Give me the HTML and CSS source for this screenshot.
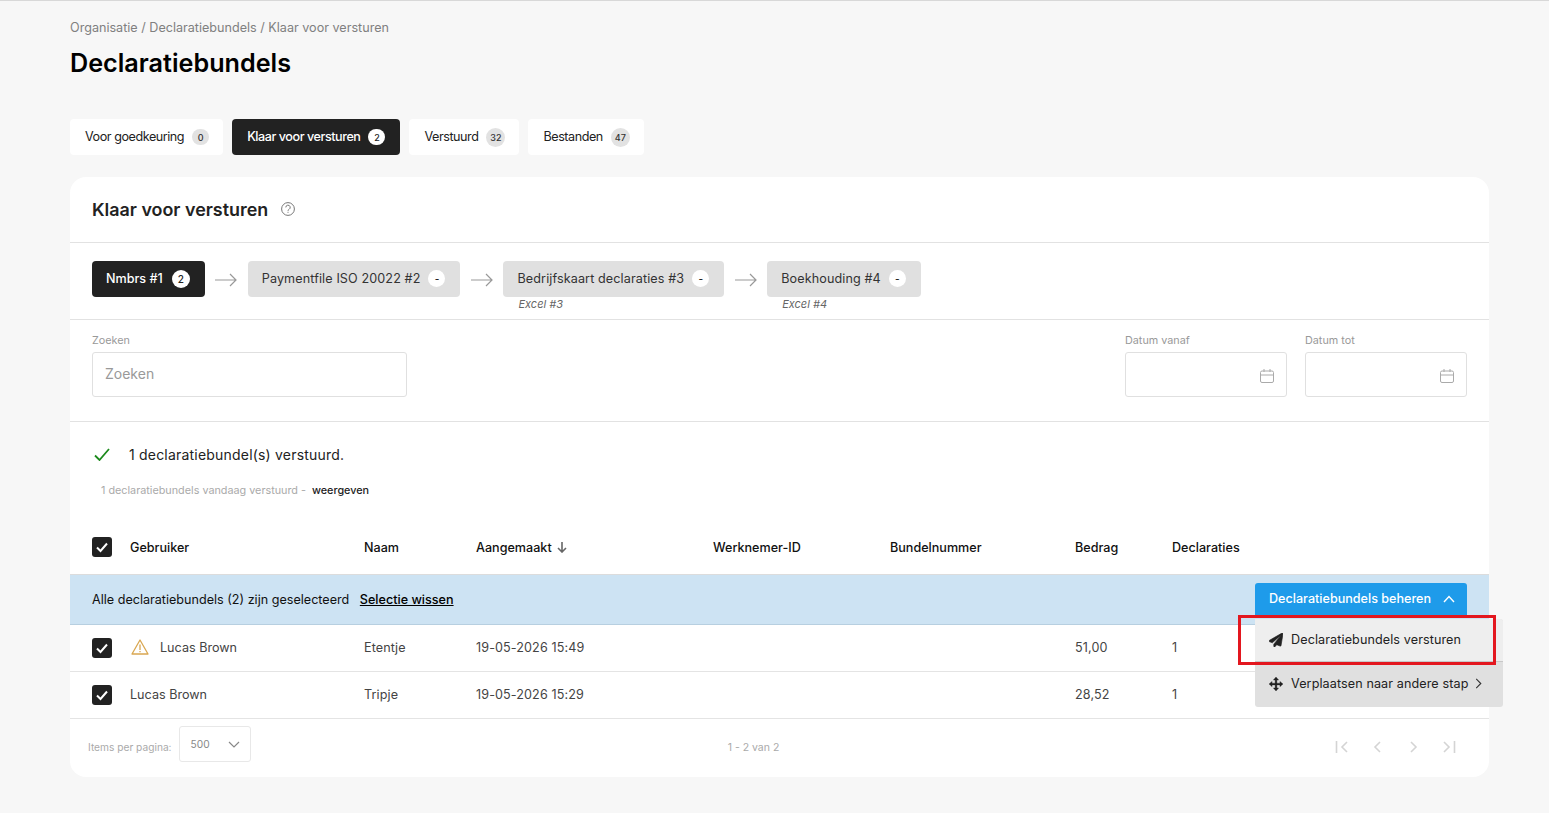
FILE: index.html
```html
<!DOCTYPE html>
<html lang="nl">
<head>
    <meta charset="UTF-8">
    <meta name="viewport" content="width=device-width, initial-scale=1.0">
    <title>Declaratiebundels</title>
    <link rel="stylesheet" href="styles.css">
</head>
<body>
    <div class="breadcrumb">Organisatie / Declaratiebundels / Klaar voor versturen</div>
    <h1>Declaratiebundels</h1>

    <div class="tabs">
        <div class="tab"><span class="tab-label">Voor goedkeuring</span> <span class="count count-small">0</span></div>
        <div class="tab active"><span class="tab-label">Klaar voor versturen</span> <span class="count count-small">2</span></div>
        <div class="tab"><span class="tab-label">Verstuurd</span> <span class="count">32</span></div>
        <div class="tab"><span class="tab-label">Bestanden</span> <span class="count">47</span></div>
    </div>

    <div class="card">
        <div class="card-header">
            <h2>Klaar voor versturen</h2>
            <svg class="help-icon" viewBox="0 0 14 14" fill="none" stroke="#777" stroke-width="1">
                <circle cx="7" cy="7" r="6.4"/>
                <path d="M4.800 5.400a2.200 2.200 0 1 1 3.300 1.900c-.7.4-1.100.8-1.100 1.500"/>
                <path d="M7 9.800v1"/>
            </svg>
        </div>

        <div class="steps">
            <div class="step-wrap">
                <div class="step active"><span class="step-label">Nmbrs #1</span> <span class="step-count">2</span></div>
            </div>
            <svg class="arrow" viewBox="0 0 22 14" fill="none" stroke="#999" stroke-width="1.2"><path d="M0 7h21M15 1l6 6-6 6"/></svg>
            <div class="step-wrap">
                <div class="step"><span class="step-label">Paymentfile ISO 20022 #2</span> <span class="step-count">-</span></div>
            </div>
            <svg class="arrow" viewBox="0 0 22 14" fill="none" stroke="#999" stroke-width="1.2"><path d="M0 7h21M15 1l6 6-6 6"/></svg>
            <div class="step-wrap">
                <div class="step"><span class="step-label">Bedrijfskaart declaraties #3</span> <span class="step-count">-</span></div>
                <div class="step-note">Excel #3</div>
            </div>
            <svg class="arrow" viewBox="0 0 22 14" fill="none" stroke="#999" stroke-width="1.2"><path d="M0 7h21M15 1l6 6-6 6"/></svg>
            <div class="step-wrap">
                <div class="step"><span class="step-label">Boekhouding #4</span> <span class="step-count">-</span></div>
                <div class="step-note">Excel #4</div>
            </div>
        </div>

        <div class="filters">
            <div class="field field-search">
                <label>Zoeken</label>
                <div class="input placeholder">Zoeken</div>
            </div>
            <div class="field field-date">
                <label>Datum vanaf</label>
                <div class="input">
                    <svg class="cal-icon" viewBox="0 0 14 14" fill="none" stroke="#aaa" stroke-width="1"><rect x="0.5" y="2" width="13" height="11.5" rx="1.5"/><path d="M0.5 6h13M4 0v3M10 0v3"/></svg>
                </div>
            </div>
            <div class="field field-date">
                <label>Datum tot</label>
                <div class="input">
                    <svg class="cal-icon" viewBox="0 0 14 14" fill="none" stroke="#aaa" stroke-width="1"><rect x="0.5" y="2" width="13" height="11.5" rx="1.5"/><path d="M0.5 6h13M4 0v3M10 0v3"/></svg>
                </div>
            </div>
        </div>

        <div class="notice">
            <div class="notice-main">
                <svg class="notice-check" viewBox="0 0 16 13" fill="none" stroke="#1c8a1c" stroke-width="1.800"><path d="M1 7.500l4.500 4.500L15 1"/></svg>
                <span>1 declaratiebundel(s) verstuurd.</span>
            </div>
            <div class="notice-sub">1 declaratiebundels vandaag verstuurd - <span class="notice-link">weergeven</span></div>
        </div>

        <div class="row row-head">
            <span class="check"><svg viewBox="0 0 20 20" fill="none" stroke="#fff" stroke-width="2"><path d="M5 10.5l3.5 3.5L15 6.5"/></svg></span>
            <span>Gebruiker</span>
            <span>Naam</span>
            <span class="sort">Aangemaakt
                <svg viewBox="0 0 12 12" fill="none" stroke="#666" stroke-width="1.6"><path d="M6 1v10M2 7l4 4 4-4"/></svg>
            </span>
            <span>Werknemer-ID</span>
            <span>Bundelnummer</span>
            <span>Bedrag</span>
            <span>Declaraties</span>
        </div>

        <div class="bulk-bar">
            <div class="bulk-text">Alle declaratiebundels (2) zijn geselecteerd <a class="bulk-clear">Selectie wissen</a></div>
            <div class="manage">
                <button class="manage-button">Declaratiebundels beheren
                    <svg viewBox="0 0 12 8" fill="none" stroke="#fff" stroke-width="1.4"><path d="M1 7l5-5.5L11 7"/></svg>
                </button>
                <div class="menu">
                    <div class="menu-item menu-item-hover">
                        <svg class="menu-icon" viewBox="0 0 512 512" fill="#222" stroke="#222" stroke-width="24" stroke-linejoin="round"><path d="M476 3.200L12.500 270.600c-18.100 10.400-15.800 35.600 2.200 43.200L121 358.400l287.300-253.200c5.500-4.900 13.300 3 8.600 8.400L176 407v80.500c0 23.600 28.500 32.900 42.500 15.800L282 426l124.600 52.200c14.200 6 30.400-2.900 33-17.400l72-432C514 8.600 491.500-5.800 476 3.200z"/></svg>
                        Declaratiebundels versturen
                    </div>
                    <div class="menu-item">
                        <svg class="menu-icon" viewBox="0 0 16 16" fill="#222" stroke="#222" stroke-width="0.4" stroke-linejoin="round"><path d="M8 0l3 3.500H9V7h3.500V5l3.500 3-3.500 3V9H9v3.500h2L8 16l-3-3.500h2V9H3.500v2L0 8l3.500-3v2H7V3.500H5z"/></svg>
                        Verplaatsen naar andere stap
                        <svg class="menu-chevron" viewBox="0 0 7 12" fill="none" stroke="#333" stroke-width="1.200"><path d="M1 1l5 5-5 5"/></svg>
                    </div>
                </div>
                <div class="highlight"></div>
            </div>
        </div>

        <div class="row row-body">
            <span class="check"><svg viewBox="0 0 20 20" fill="none" stroke="#fff" stroke-width="2"><path d="M5 10.5l3.5 3.5L15 6.5"/></svg></span>
            <span class="user">
                <svg class="warn-icon" viewBox="0 0 18 16" fill="none" stroke="#d9a751" stroke-width="1.300"><path d="M9 1L1 15h16z" stroke-linejoin="round"/><path d="M9 5.500v5.500M9 12v1.200"/></svg>
                Lucas Brown
            </span>
            <span>Etentje</span>
            <span>19-05-2026 15:49</span>
            <span></span>
            <span></span>
            <span>51,00</span>
            <span>1</span>
        </div>
        <div class="row row-body">
            <span class="check"><svg viewBox="0 0 20 20" fill="none" stroke="#fff" stroke-width="2"><path d="M5 10.5l3.5 3.5L15 6.5"/></svg></span>
            <span class="user">Lucas Brown</span>
            <span>Tripje</span>
            <span>19-05-2026 15:29</span>
            <span></span>
            <span></span>
            <span>28,52</span>
            <span>1</span>
        </div>

        <div class="pager">
            <div class="pager-size">
                <span class="pager-label">Items per pagina:</span>
                <div class="pager-select">500
                    <svg viewBox="0 0 12 7" fill="none" stroke="#888" stroke-width="1.200"><path d="M1 1l5 5 5-5"/></svg>
                </div>
            </div>
            <div class="pager-range">1 - 2 van 2</div>
            <div class="pager-nav">
                <svg viewBox="0 0 14 12" fill="none" stroke="#d4d4d4" stroke-width="1.600"><path d="M2.500 0v12M13 1L8 6l5 5"/></svg>
                <svg viewBox="0 0 14 12" fill="none" stroke="#d4d4d4" stroke-width="1.600"><path d="M10 1L5 6l5 5"/></svg>
                <svg viewBox="0 0 14 12" fill="none" stroke="#d4d4d4" stroke-width="1.600"><path d="M5 1l5 5-5 5"/></svg>
                <svg viewBox="0 0 14 12" fill="none" stroke="#d4d4d4" stroke-width="1.600"><path d="M12.500 0v12M2 1l5 5-5 5"/></svg>
            </div>
        </div>
    </div>
</body>
</html>
```

FILE: styles.css
```css
* {
    box-sizing: border-box;
}
body {
    margin: 0;
    height: 813px;
    overflow: hidden;
    padding: 0 60px 0 70px;
    background: #f7f7f7;
    border-top: 1px solid #d8d8d8;
    font-family: Inter, "Liberation Sans", sans-serif;
    font-size: 12.6px;
    color: #333;
}
.breadcrumb {
    padding-top: 18px;
    line-height: 17px;
    color: #808080;
}
h1 {
    margin: 9px 0 0;
    font-size: 25.2px;
    line-height: 36px;
    font-weight: 600;
    color: #000;
}
.tabs {
    display: flex;
    gap: 9px;
    margin-top: 38px;
}
.tab {
    display: flex;
    align-items: center;
    gap: 8px;
    height: 36px;
    padding: 0 14px 0 15px;
    background: #fff;
    border-radius: 4px;
    color: #222;
}
.tab-label {
    padding-bottom: 2px;
    letter-spacing: -0.45px;
}
.tab.active {
    background: #222;
    color: #fff;
    font-weight: 500;
    padding: 0 15px;
}
.count {
    display: flex;
    align-items: center;
    justify-content: center;
    width: 19px;
    height: 19px;
    border-radius: 50%;
    background: #e2e2e2;
    font-size: 9px;
    font-weight: 500;
    color: #333;
}
.count-small {
    width: 17px;
    height: 16px;
    border-radius: 8px;
}
.tab.active .count {
    background: #fff;
    color: #222;
}
.card {
    margin-top: 22px;
    height: 600px;
    background: #fff;
    border-radius: 16px;
}
.card-header {
    display: flex;
    align-items: center;
    gap: 13px;
    height: 66px;
    padding-left: 22px;
    border-bottom: 1px solid #e2e2e2;
}
h2 {
    margin: 0;
    font-size: 17.9px;
    font-weight: 600;
    color: #222;
}
.help-icon {
    width: 14px;
    height: 14px;
    margin-bottom: 2px;
}
.steps {
    display: flex;
    align-items: flex-start;
    height: 77px;
    padding: 18px 0 0 22px;
    border-bottom: 1px solid #e2e2e2;
}
.step {
    display: flex;
    align-items: center;
    gap: 8px;
    height: 36px;
    padding: 0 15px 0 14px;
    background: #e0e0e0;
    border-radius: 4px;
    color: #333;
}
.step-label {
    padding-bottom: 1px;
    letter-spacing: 0.11px;
}
.step.active {
    gap: 9px;
    background: #222;
    color: #fff;
    font-weight: 500;
}
.step.active .step-label {
    letter-spacing: 0;
}
.step-count {
    display: flex;
    align-items: center;
    justify-content: center;
    width: 17px;
    height: 17px;
    margin-bottom: 1px;
    border-radius: 50%;
    background: #fff;
    font-size: 10px;
    font-weight: 500;
    color: #222;
}
.step.active .step-count {
    width: 18px;
    height: 18px;
}
.step-note {
    padding: 1px 0 0 15px;
    font-size: 11px;
    line-height: 13px;
    font-style: italic;
    color: #666;
}
.arrow {
    width: 22px;
    height: 14px;
    margin: 12px 10.5px 0;
}
.filters {
    display: flex;
    gap: 18px;
    height: 102px;
    padding: 14px 22px 0;
    border-bottom: 1px solid #e2e2e2;
}
.field label {
    display: block;
    font-size: 10.8px;
    line-height: 13px;
    color: #999;
    margin-bottom: 5px;
}
.field-search {
    width: 315px;
    margin-right: auto;
}
.field-date {
    width: 162px;
}
.input {
    display: flex;
    align-items: center;
    justify-content: flex-end;
    height: 45px;
    padding: 0 12px;
    border: 1px solid #e0e0e0;
    border-radius: 3px;
}
.placeholder {
    justify-content: flex-start;
    padding-bottom: 2px;
    font-size: 14px;
    color: #999;
}
.cal-icon {
    width: 14px;
    height: 14px;
    margin-top: 2px;
}
.notice {
    height: 100px;
    padding-left: 22px;
}
.notice-main {
    display: flex;
    align-items: center;
    gap: 18px;
    padding-top: 24px;
    font-size: 14px;
    line-height: 17px;
    letter-spacing: 0.2px;
    color: #222;
}
.notice-check {
    width: 16px;
    height: 13px;
    margin-left: 2px;
    margin-right: 1px;
}
.notice-sub {
    padding: 21px 0 0 9px;
    font-size: 10.8px;
    line-height: 14px;
    color: #aaa;
}
.notice-link {
    margin-left: 3px;
    font-weight: 500;
    color: #222;
}
.row {
    display: grid;
    grid-template-columns: 38px 234px 112px 237px 177px 185px 97px 1fr;
    align-items: center;
    padding-left: 22px;
}
.row-head {
    height: 53px;
    padding-bottom: 2px;
    border-bottom: 1px solid #dcdcdc;
    font-weight: 500;
    color: #111;
}
.row-body {
    height: 47px;
    padding-bottom: 2px;
    border-bottom: 1px solid #e4e4e4;
    letter-spacing: 0.1px;
    color: #444;
}
.row-body .check {
    margin-top: 2px;
}
.check {
    display: block;
    width: 20px;
    height: 20px;
    background: #222;
    border-radius: 3px;
}
.check svg {
    display: block;
}
.sort {
    display: flex;
    align-items: center;
    gap: 4px;
}
.sort svg {
    width: 12px;
    height: 12px;
}
.user {
    display: flex;
    align-items: center;
    gap: 11px;
    letter-spacing: 0;
}
.warn-icon {
    width: 18px;
    height: 16px;
    margin-left: 1px;
}
.bulk-bar {
    display: flex;
    align-items: flex-start;
    justify-content: space-between;
    height: 50px;
    padding: 8px 22px 0;
    background: #cde3f3;
    border-bottom: 1px solid #b7cfe0;
}
.bulk-text {
    line-height: 33px;
    color: #111;
}
.bulk-clear {
    margin-left: 7px;
    font-weight: 500;
    color: #000;
    text-decoration: underline;
}
.manage {
    position: relative;
    width: 212px;
}
.manage-button {
    display: flex;
    align-items: center;
    justify-content: space-between;
    width: 100%;
    height: 32px;
    padding: 0 12px 2px 14px;
    background: #1e9bea;
    border: none;
    border-radius: 3px 3px 0 0;
    font: 500 12.6px Inter, "Liberation Sans", sans-serif;
    color: #fff;
}
.manage-button svg {
    width: 12px;
    height: 8px;
    margin-top: 2px;
}
.menu {
    position: absolute;
    z-index: 2;
    top: 36px;
    left: 0;
    width: 248px;
    background: #e0e0e0;
    border-radius: 0 3px 3px 3px;
    overflow: hidden;
}
.menu-item {
    display: flex;
    align-items: center;
    height: 45px;
    padding: 0 0 2px 14px;
    letter-spacing: 0.1px;
    color: #222;
}
.menu-item-hover {
    height: 43px;
    padding-bottom: 1px;
    background: #eee;
    border-bottom: 1px solid #c8c8c8;
}
.menu-icon {
    width: 14px;
    height: 14px;
    margin-right: 8px;
}
.menu-chevron {
    width: 7px;
    height: 11px;
    margin-left: 7px;
}
.highlight {
    position: absolute;
    z-index: 3;
    top: 32px;
    left: -17px;
    width: 258px;
    height: 50px;
    border: 3px solid #e3171f;
}
.pager {
    display: grid;
    grid-template-columns: 1fr auto 1fr;
    align-items: center;
    height: 58px;
    padding: 0 33px 8px 18px;
}
.pager-size {
    display: flex;
    align-items: center;
    gap: 7px;
}
.pager-label {
    font-size: 10.2px;
    color: #aaa;
    padding-top: 6px;
}
.pager-select {
    display: flex;
    align-items: center;
    justify-content: space-between;
    width: 72px;
    height: 36px;
    padding: 0 10px 0 11px;
    border: 1px solid #e8e8e8;
    border-radius: 3px;
    font-size: 10.2px;
    color: #888;
}
.pager-select svg {
    width: 12px;
    height: 7px;
}
.pager-range {
    font-size: 10.5px;
    color: #aaa;
    padding: 6px 37px 0 0;
}
.pager-nav {
    display: flex;
    justify-content: flex-end;
    gap: 22px;
    padding-top: 6px;
}
.pager-nav svg {
    width: 14px;
    height: 12px;
}
```
